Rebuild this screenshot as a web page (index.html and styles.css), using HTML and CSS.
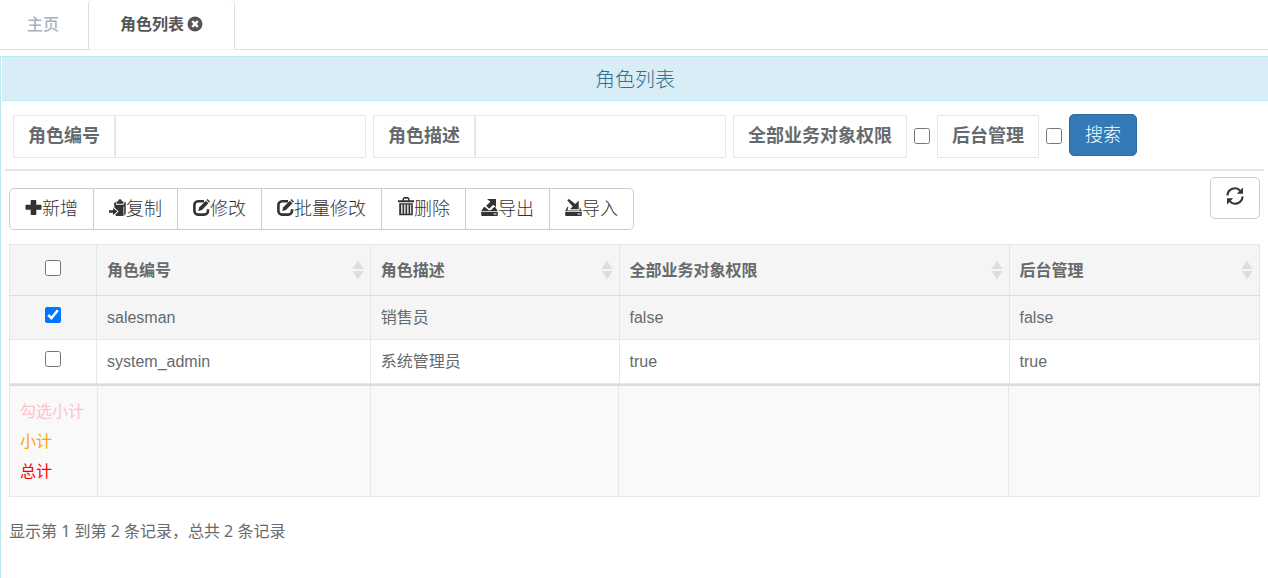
FILE: index.html
```html
<!DOCTYPE html>
<html lang="zh-CN">
<head>
<meta charset="utf-8">
<title>角色列表</title>
<link rel="stylesheet" href="styles.css">
</head>
<body>
<svg class="defs" width="0" height="0" aria-hidden="true">
  <symbol id="i-plus" viewBox="0 0 17 17"><path d="M6.500 1h4a.8.8 0 0 1 .8.8v3.900h4.400a.8.8 0 0 1 .8.8v3.400a.8.8 0 0 1-.8.8h-4.400v4.500a.8.8 0 0 1-.8.8h-4a.8.8 0 0 1-.8-.8v-4.500H1.300a.8.8 0 0 1-.8-.8V6.500a.8.8 0 0 1 .8-.8h4.400V1.800a.8.8 0 0 1 .8-.8z"/></symbol>
  <symbol id="i-paste" viewBox="0 0 17 17"><path d="M7.300 2.800L9.200 2.200 9.800.6Q11 0 12.200.6l.6 1.600 1.900.6-.5 2H7.800z"/><path d="M5 4l1.900-.9.1 2.700h7.600l1.200-3 .9.500V15l-1.500 1.700V6.800l-.7 1V17H7.200l-1-1.300 3.500-3.200-4.200-3.800z"/><path d="M0 11.200h4V9l4.500 3.500L4 16v-2.300H0z"/></symbol>
  <symbol id="i-edit" viewBox="0 0 17 17"><path d="M11 2.300H5A3.700 3.700 0 0 0 1.400 6v6A3.700 3.700 0 0 0 5 15.600h6.300A3.700 3.700 0 0 0 15 12v-1.700" fill="none" stroke="currentColor" stroke-width="2.600"/><path d="M6.300 8.200L12.800 1.700l2.700 2.600L9 10.900l-3.900 1.200z"/><path d="M13.500 1L14.500 0 17 2.500l-1 1z"/></symbol>
  <symbol id="i-trash" viewBox="0 0 17 19"><path d="M1 3.300h4.500V1.500L7 0h4l1.500 1.500v1.800H17v2H1zM7 3.300h4V1.700H7z" fill-rule="evenodd"/><path d="M2.200 6.300h13.600v12H2.200zM4.200 7.500v9.300h1.300V7.500zm3 0v9.300h1.300V7.500zm3 0v9.300h1.300V7.500zm3 0v9.300h1V7.500z" fill-rule="evenodd"/></symbol>
  <symbol id="i-export" viewBox="0 0 17 17"><path d="M6 0h9v8.200l-2.600-2.500-4.300 4-3-2.900 4.300-4z"/><path d="M2.900 8H4l3.600 3.300h2.200L13.200 8h.9l2.600 3.900v.3H.3v-.3z"/><path d="M.2 13h16.600v3.200q0 .8-.8.800H1q-.8 0-.8-.8zM12.500 14.500v1h3v-1z" fill-rule="evenodd"/></symbol>
  <symbol id="i-import" viewBox="0 0 17 17"><path d="M2.200 1.200L4 0l6.300 5L13.700 1.500v8.800H4.900l2.800-2.700z"/><path d="M2.300 8h1.100l-1 3.400h12.300V8l2 3.900v.3H.3v-.3z"/><path d="M.2 13h16.600v3.200q0 .8-.8.800H1q-.8 0-.8-.8zM12.500 14.500v1h3v-1z" fill-rule="evenodd"/></symbol>
  <symbol id="i-refresh" viewBox="0 0 18 18"><path d="M1.500 8.500a7.300 7.300 0 0 1 12.800-4.600M16.500 9.500A7.300 7.300 0 0 1 3.700 14.100" fill="none" stroke="currentColor" stroke-width="2.100"/><path d="M17 .6v6.200h-6.200zM1 17.400v-6.200h6.200z"/></symbol>
  <symbol id="i-close" viewBox="0 0 16 16"><path fill-rule="evenodd" d="M8 .5a7.500 7.500 0 1 0 0 15 7.500 7.500 0 0 0 0-15zM6 4.300l2 2 2-2L11.700 6l-2 2 2 2L10 11.700l-2-2-2 2L4.300 10l2-2-2-2z"/></symbol>
  <symbol id="i-sort" viewBox="0 0 12 20"><path d="M6 .5L11.500 9H.5zM.5 11h11L6 19.500z"/></symbol>
</svg>

<nav class="tabs">
  <a class="tab" href="#home">主页</a>
  <a class="tab active" href="#roles">角色列表<svg class="close"><use href="#i-close"/></svg></a>
</nav>

<main class="panel">
  <h1 class="panel-title">角色列表</h1>
  <div class="panel-body">
    <form class="search">
      <div class="group"><label class="addon" for="code">角色编号</label><input class="field" id="code" type="text"></div>
      <div class="group"><label class="addon" for="desc">角色描述</label><input class="field" id="desc" type="text"></div>
      <label class="addon" for="all">全部业务对象权限</label>
      <input class="check" id="all" type="checkbox">
      <label class="addon" for="admin">后台管理</label>
      <input class="check" id="admin" type="checkbox">
      <button class="primary" type="button">搜索</button>
    </form>
    <hr class="rule">
    <div class="toolbar">
      <div class="buttons">
        <button class="btn" type="button"><svg class="icon"><use href="#i-plus"/></svg>新增</button>
        <button class="btn" type="button"><svg class="icon"><use href="#i-paste"/></svg>复制</button>
        <button class="btn" type="button"><svg class="icon"><use href="#i-edit"/></svg>修改</button>
        <button class="btn" type="button"><svg class="icon"><use href="#i-edit"/></svg>批量修改</button>
        <button class="btn" type="button"><svg class="icon tall"><use href="#i-trash"/></svg>删除</button>
        <button class="btn" type="button"><svg class="icon"><use href="#i-export"/></svg>导出</button>
        <button class="btn" type="button"><svg class="icon"><use href="#i-import"/></svg>导入</button>
      </div>
      <button class="refresh" type="button" aria-label="刷新"><svg class="refresh-icon"><use href="#i-refresh"/></svg></button>
    </div>

    <table class="grid">
      <colgroup><col class="c-check"><col class="c-code"><col class="c-desc"><col class="c-all"><col class="c-admin"></colgroup>
      <thead>
        <tr>
          <th class="pick"><input class="check" type="checkbox" aria-label="全选"></th>
          <th><div class="head">角色编号<svg class="sort"><use href="#i-sort"/></svg></div></th>
          <th><div class="head">角色描述<svg class="sort"><use href="#i-sort"/></svg></div></th>
          <th><div class="head">全部业务对象权限<svg class="sort"><use href="#i-sort"/></svg></div></th>
          <th><div class="head">后台管理<svg class="sort"><use href="#i-sort"/></svg></div></th>
        </tr>
      </thead>
      <tbody>
        <tr class="selected"><td class="pick"><input class="check" type="checkbox" aria-label="salesman" checked></td><td>salesman</td><td>销售员</td><td>false</td><td>false</td></tr>
        <tr><td class="pick"><input class="check" type="checkbox" aria-label="system_admin"></td><td>system_admin</td><td>系统管理员</td><td>true</td><td>true</td></tr>
      </tbody>
    </table>
    <table class="grid totals">
      <colgroup><col class="c-sum"><col class="c-code"><col class="c-desc"><col class="c-all"><col class="c-admin"></colgroup>
      <tbody>
        <tr><td><div class="pink">勾选小计</div><div class="orange">小计</div><div class="red">总计</div></td><td></td><td></td><td></td><td></td></tr>
      </tbody>
    </table>
    <p class="info">显示第 1 到第 2 条记录，总共 2 条记录</p>
  </div>
</main>
</body>
</html>
```

FILE: styles.css
```css
* { box-sizing: border-box; }
body {
  margin: 0;
  min-height: 100vh;
  display: flex;
  flex-direction: column;
  background: #fff;
  color: #676a6c;
  font: 16px/23px "Liberation Sans", "Noto Sans CJK SC", sans-serif;
}
svg { fill: currentColor; flex: none; }
.defs { position: absolute; }
button, input { font: inherit; margin: 0; }

.tabs { display: flex; height: 50px; border-bottom: 1px solid #ddd; }
.tab {
  display: flex;
  align-items: center;
  height: 50px;
  padding: 0 29px 2px 27px;
  color: #a7b1c2;
  font-weight: 500;
  text-decoration: none;
}
.tab.active {
  padding: 0 31px 1px;
  border: 1px solid #ddd;
  border-top: 0;
  border-bottom-color: #f3f3f3;
  border-radius: 4px 4px 0 0;
  background: #fff;
  color: #555;
  font-weight: 700;
}
.close { width: 16px; height: 16px; margin-left: 3px; }

.panel {
  flex: 1;
  margin-top: 6px;
  border-top: 1px solid #bce8f1;
  border-left: 1px solid #bce8f1;
}
.panel-title {
  margin: 0 0 0 1px;
  padding: 11px 0 8px;
  border-bottom: 1px solid #bce8f1;
  background: #d9edf7;
  color: #31708f;
  font-size: 20px;
  font-weight: 300;
  line-height: 24px;
  text-align: center;
}
.panel-body { padding: 13px 8px 0; }

.search { display: flex; align-items: center; gap: 7px; padding-left: 4px; }
.group { display: flex; flex: 0 1 353px; min-width: 0; }
.addon {
  height: 43px;
  padding: 0 14px;
  border: 1px solid #e5e6e7;
  border-radius: 1px;
  font-size: 18px;
  font-weight: 700;
  line-height: 41px;
  white-space: nowrap;
}
.field {
  flex: 1;
  min-width: 0;
  height: 43px;
  padding: 6px 12px;
  border: 1px solid #e5e6e7;
  border-radius: 1px;
  background: #fff;
}
.check { display: block; width: 16px; height: 16px; }
.primary {
  height: 42px;
  margin-bottom: 2px;
  padding: 0 15px;
  border: 1px solid #2e6da4;
  border-radius: 5px;
  background: #337ab7;
  color: #fff;
  font-size: 18px;
  font-weight: 300;
}
.rule { height: 2px; margin: 11px -4px 0; border: 0; background: #e5e5e5; }

.toolbar { display: flex; justify-content: space-between; padding: 6px 0 14px; }
.buttons { display: flex; padding-top: 11px; }
.btn {
  display: flex;
  align-items: center;
  height: 42px;
  padding: 0 15px;
  border: 1px solid #ccc;
  border-left-width: 0;
  background: #fff;
  color: #333;
  font-size: 18px;
  font-weight: 300;
}
.btn:first-child { border-left-width: 1px; border-radius: 5px 0 0 5px; }
.btn:last-child { border-radius: 0 5px 5px 0; }
.icon { width: 17px; height: 17px; margin-bottom: 3px; }
.icon.tall { height: 19px; margin-bottom: 5px; }
.refresh {
  display: grid;
  place-items: center;
  width: 50px;
  height: 42px;
  padding: 0 0 4px;
  border: 1px solid #ccc;
  border-radius: 5px;
  background: #fff;
  color: #333;
}
.refresh-icon { width: 18px; height: 18px; }

.grid { width: 100%; border-collapse: collapse; table-layout: fixed; }
.grid th, .grid td { border: 1px solid #e7e7e7; padding: 10px; text-align: left; }
.grid th { height: 51px; border-bottom-color: #ddd; background: #f5f5f5; }
.grid td { height: 44px; }
.grid .selected { background: #f5f5f5; }
.grid .pick { padding: 0 0 5px; }
.pick .check { margin: 0 auto; }
.head { display: flex; align-items: center; justify-content: space-between; }
.sort { width: 12px; height: 20px; margin-right: -4px; color: #ddd; }
.c-check { width: 87px; }
.c-sum { width: 88px; }
.c-code { width: 21.9%; }
.c-desc { width: 19.9%; }
.c-all { width: 31.2%; }

.totals { background: #f9f9f9; line-height: 30px; }
.totals td { vertical-align: top; white-space: nowrap; }
.totals tr:first-child td { border-top: 2px solid #ddd; }
.totals td { padding-top: 11px; padding-bottom: 9px; }
.totals .c-code { width: 21.8%; }
.totals .c-desc { width: 19.9%; }
.pink { color: pink; }
.orange { color: orange; }
.red { color: red; }
.info {
  margin: 23px 0 0;
  font-family: "Noto Sans", "Noto Sans CJK SC", sans-serif;
}
```
